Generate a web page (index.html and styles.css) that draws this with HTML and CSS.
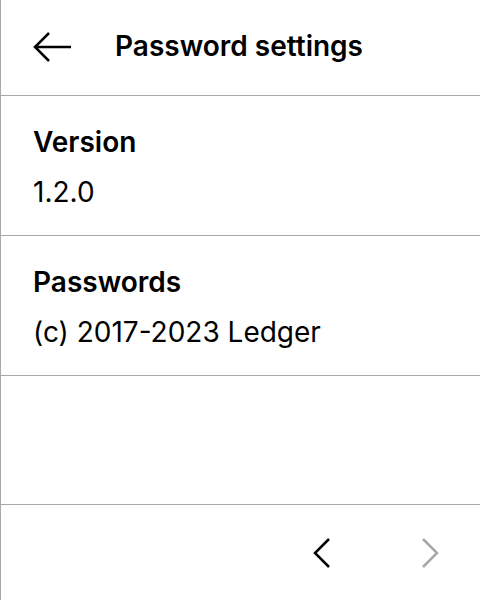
FILE: index.html
```html
<!DOCTYPE html>
<html>
<head>
<meta charset="utf-8">
<link rel="stylesheet" href="styles.css">
</head>
<body>
<div class="screen">
  <header class="header">
    <div class="back">
      <svg width="40" height="32" viewBox="0 0 40 32"><path d="M38 16H3M16 2L2 16L16 30" fill="none" stroke="#000" stroke-width="2.5"/></svg>
    </div>
    <h1 class="title">Password settings</h1>
  </header>
  <section class="item">
    <div class="label">Version</div>
    <div class="value">1.2.0</div>
  </section>
  <section class="item">
    <div class="label">Passwords</div>
    <div class="value">(c) 2017-2023 Ledger</div>
  </section>
  <div class="spacer"></div>
  <footer class="footer">
    <div class="nav">
      <svg width="20" height="32" viewBox="0 0 20 32"><path d="M17 2L3 16L17 30" fill="none" stroke="#000" stroke-width="2.5"/></svg>
    </div>
    <div class="nav disabled">
      <svg width="20" height="32" viewBox="0 0 20 32"><path d="M3 2L17 16L3 30" fill="none" stroke="#a8a8a8" stroke-width="2.5"/></svg>
    </div>
  </footer>
</div>
</body>
</html>
```

FILE: styles.css
```css
* { box-sizing: border-box; }
html, body { margin: 0; padding: 0; background: #fff; }
body { font-family: Inter, "Noto Sans", sans-serif; color: #000; }
.screen {
  width: 480px; height: 600px;
  border-left: 1px solid #a8a8a8;
  display: flex; flex-direction: column;
}
.header {
  height: 96px; flex: none;
  border-bottom: 1px solid #a8a8a8;
  display: flex; align-items: center;
  padding-left: 32px; padding-bottom: 3px;
}
.back { width: 40px; height: 32px; display: flex; margin-top: 2px; }
.title { margin: 0 0 0 42px; font-size: 28px; line-height: 40px; font-weight: 600; }
.item {
  height: 140px; flex: none;
  border-bottom: 1px solid #a8a8a8;
  padding: 26px 0 0 32px;
}
.label { font-size: 28px; font-weight: 600; line-height: 40px; }
.value { font-size: 28px; font-weight: 400; line-height: 40px; margin-top: 10px; }
.spacer { flex: 1; border-bottom: 1px solid #a8a8a8; }
.footer {
  height: 95px; flex: none;
  display: flex; align-items: center; justify-content: flex-end;
  padding-right: 40px; gap: 88px;
}
.nav { width: 20px; height: 32px; display: flex; }
```
